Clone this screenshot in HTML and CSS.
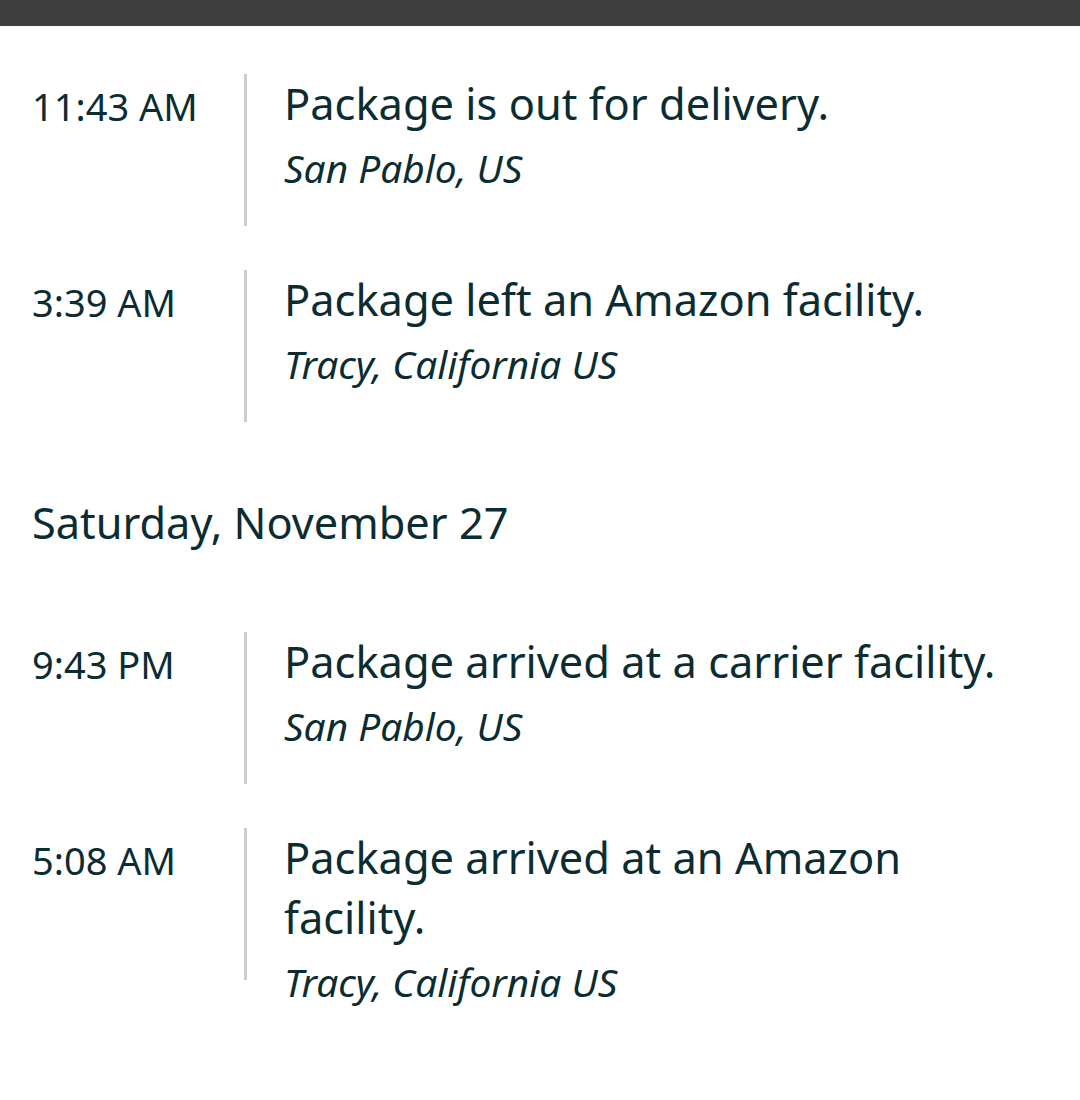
FILE: index.html
```html
<!DOCTYPE html>
<html lang="en">
<head>
<meta charset="utf-8">
<title>Tracking</title>
<link rel="stylesheet" href="styles.css">
</head>
<body>
<div class="topbar"></div>
<main class="timeline">
  <section class="event first">
    <div class="time">11:43 AM</div>
    <div class="divider"></div>
    <div class="detail">
      <div class="status">Package is out for delivery.</div>
      <div class="place">San Pablo, US</div>
    </div>
  </section>
  <section class="event">
    <div class="time">3:39 AM</div>
    <div class="divider"></div>
    <div class="detail">
      <div class="status">Package left an Amazon facility.</div>
      <div class="place">Tracy, California US</div>
    </div>
  </section>
  <h2 class="day">Saturday, November 27</h2>
  <section class="event">
    <div class="time">9:43 PM</div>
    <div class="divider"></div>
    <div class="detail">
      <div class="status">Package arrived at a carrier facility.</div>
      <div class="place">San Pablo, US</div>
    </div>
  </section>
  <section class="event">
    <div class="time">5:08 AM</div>
    <div class="divider"></div>
    <div class="detail">
      <div class="status">Package arrived at an Amazon facility.</div>
      <div class="place">Tracy, California US</div>
    </div>
  </section>
</main>
</body>
</html>
```

FILE: styles.css
```css
html, body {
  margin: 0;
  padding: 0;
  background: #ffffff;
}
body {
  width: 1080px;
  font-family: "Noto Sans", "Open Sans", sans-serif;
  color: #0b2d32;
}
.topbar {
  height: 26px;
  background: #3f3f3f;
}
.timeline {
  padding: 48px 40px 0 32px;
}
.event {
  display: flex;
  align-items: flex-start;
  margin-bottom: 44px;
}
.time {
  width: 212px;
  flex: none;
  font-size: 38px;
  line-height: 64px;
}
.divider {
  width: 3px;
  height: 152px;
  background: #cccccc;
  flex: none;
}
.detail {
  margin-left: 37px;
  flex: 1;
}
.status {
  font-size: 43.4px;
  line-height: 60px;
}
.place {
  font-size: 38.8px;
  font-style: italic;
  line-height: 64px;
  margin-top: 2px;
}
.day {
  margin: 71px 0 79px 0;
  font-weight: normal;
  font-size: 43.3px;
  line-height: 60px;
}
```
